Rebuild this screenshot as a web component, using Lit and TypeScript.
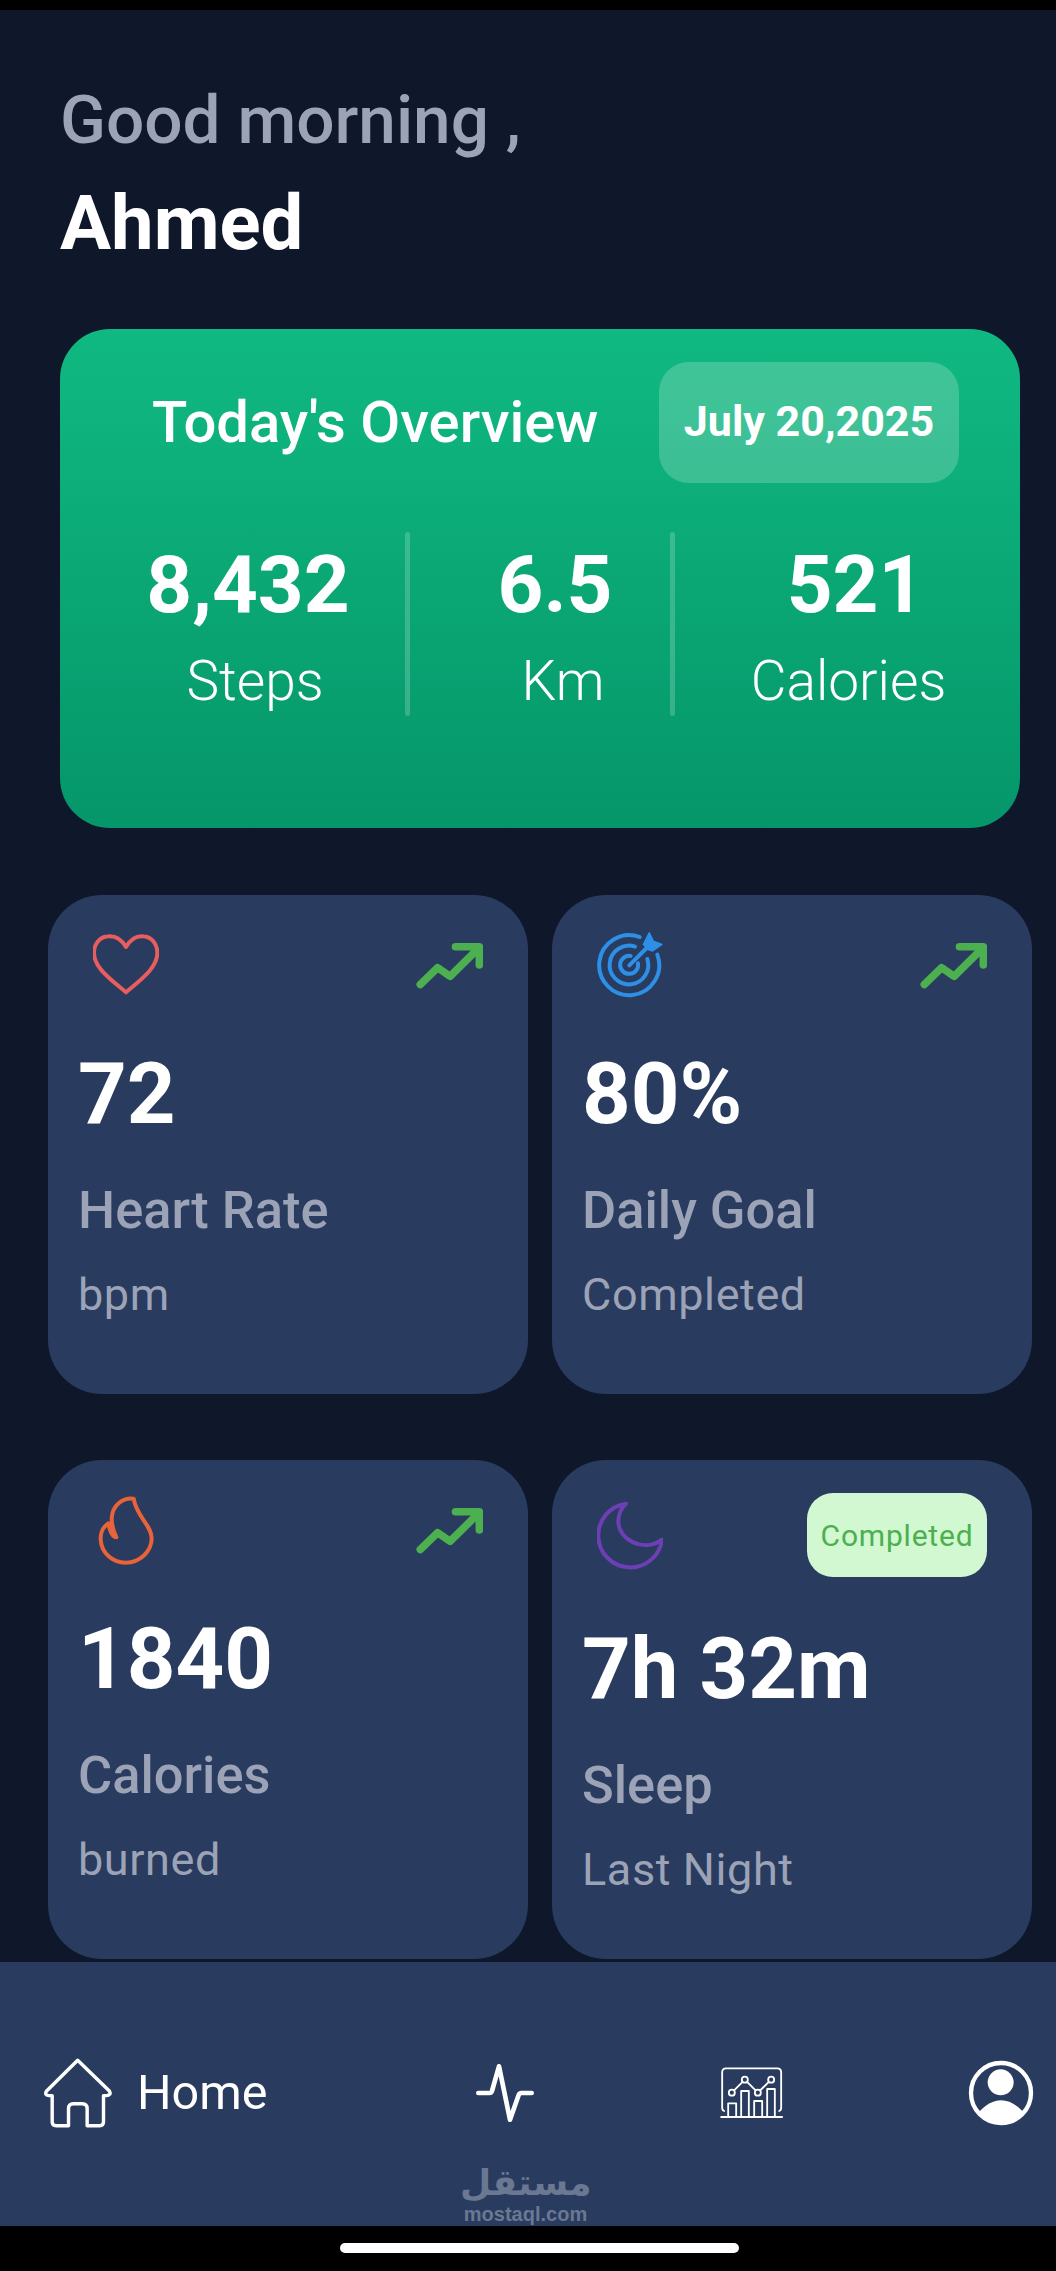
import { LitElement, html, css, svg } from "lit";

const trendIcon = html`<svg class="trend" viewBox="1128 111 202 222">
  <path d="M1141 281L1193 230L1231 256L1318 170M1247 167H1319V222"/>
</svg>`;

const icons = {
  heart: svg`<path stroke="#e85d5d" d="M259 172C245 148 225 138 205 140C178 142 163 165 163 190C163 235 215 270 259 308C303 270 353 235 353 190C353 165 338 142 311 140C291 138 273 148 259 172Z"/>`,
  target: svg`<g stroke="#2d8fe6">
      <path d="M149 33A90 90 0 1 0 202 86"/>
      <path d="M135 62A58 58 0 1 0 172 99"/>
      <path d="M122 90A27 27 0 1 0 144 112"/>
      <path d="M118 118L170 66"/>
      <path fill="#2d8fe6" stroke-width="4" d="M178 20L190 45L216 55L188 75L172 70L160 55Z"/>
    </g>`,
  flame: svg`<path stroke="#e8633a" d="M282 146C250 142 218 165 216 205C216 225 222 245 230 262C222 262 212 250 206 220C190 230 182 250 183 268C185 310 220 338 258 338C300 338 336 305 336 265C336 225 290 200 282 146Z"/>`,
  moon: svg`<path stroke="#6c3fb5" d="M228 162A96 96 0 1 0 336 270C280 310 205 270 205 215C205 195 215 175 228 162Z"/>`,
};

const boxes: Record<string, string> = {
  heart: "160 115 198 222",
  target: "21 6 198 222",
  flame: "160 129 198 222",
  moon: "141 145 198 222",
};

export class StatTile extends LitElement {
  static properties = {
    icon: { type: String },
    value: { type: String },
    label: { type: String },
    sub: { type: String },
    badge: { type: String },
  };

  declare icon: keyof typeof icons;
  declare value: string;
  declare label: string;
  declare sub: string;
  declare badge: string;

  constructor() {
    super();
    this.icon = "heart";
    this.value = "";
    this.label = "";
    this.sub = "";
    this.badge = "";
  }

  static styles = css`
    :host {
      display: block;
      box-sizing: border-box;
      height: 499px;
      background: #293b5e;
      border-radius: 54px;
      padding: 33px 45px 0 30px;
      font-family: Roboto, sans-serif;
    }
    .top {
      display: flex;
      justify-content: space-between;
      align-items: center;
      min-height: 74px;
      margin-left: 15px;
    }
    .icon {
      width: 66px;
      height: 74px;
      fill: none;
      stroke-width: 12;
      stroke-linejoin: round;
      stroke-linecap: round;
    }
    .trend {
      width: 67px;
      height: 74px;
      fill: none;
      stroke: #4caf50;
      stroke-width: 23;
      stroke-linecap: round;
      stroke-linejoin: round;
    }
    .badge {
      width: 180px;
      height: 84px;
      border-radius: 26px;
      background: #d1f8d0;
      color: #4caf50;
      font-size: 30px;
      letter-spacing: 0.8px;
      display: flex;
      align-items: center;
      justify-content: center;
    }
    .value {
      font-size: 85px;
      font-weight: 700;
      color: #fff;
      line-height: 100px;
      margin-top: 42px;
    }
    .label {
      font-size: 52.4px;
      font-weight: 500;
      color: #9ca3b7;
      line-height: 60px;
      margin-top: 36px;
    }
    .sub {
      font-size: 45px;
      color: #9ca3b7;
      line-height: 50px;
      margin-top: 30px;
      letter-spacing: 0.6px;
    }
  `;

  render() {
    return html`
      <div class="top">
        <svg class="icon" viewBox=${boxes[this.icon]}>${icons[this.icon]}</svg>
        ${this.badge ? html`<div class="badge">${this.badge}</div>` : trendIcon}
      </div>
      <div class="value">${this.value}</div>
      <div class="label">${this.label}</div>
      <div class="sub">${this.sub}</div>
    `;
  }
}
customElements.define("stat-tile", StatTile);

export class AppRoot extends LitElement {
  static styles = css`
    :host {
      display: flex;
      flex-direction: column;
      width: 1056px;
      height: 2271px;
      background: #0f172a;
      font-family: Roboto, sans-serif;
      color: #fff;
      overflow: hidden;
    }
    .statusbar {
      height: 10px;
      background: #000;
    }
    .hello {
      margin: 70px 0 0 60px;
      font-size: 67.5px;
      font-weight: 500;
      line-height: 80px;
      color: #9ca3b7;
    }
    .name {
      margin: 23px 0 0 60px;
      font-size: 76px;
      font-weight: 700;
      line-height: 80px;
    }
    .overview {
      box-sizing: border-box;
      height: 499px;
      margin: 66px 36px 0 60px;
      padding: 33px 61px 0 0;
      border-radius: 50px;
      background: linear-gradient(180deg, #10b981, #059669);
    }
    .overview-head {
      display: flex;
      justify-content: space-between;
      align-items: center;
      padding-left: 92px;
    }
    .overview-title {
      font-size: 58px;
      font-weight: 500;
      padding-bottom: 2px;
    }
    .date {
      box-sizing: border-box;
      width: 300px;
      height: 121px;
      padding-bottom: 3px;
      border-radius: 30px;
      background: rgba(255, 255, 255, 0.2);
      font-size: 43px;
      font-weight: 700;
      display: flex;
      align-items: center;
      justify-content: center;
    }
    .stats {
      display: flex;
      height: 184px;
      margin: 49px -61px 0 0;
    }
    .stat {
      flex: none;
      box-sizing: border-box;
      text-align: center;
      padding-top: 8px;
    }
    .stat-value {
      font-size: 80px;
      font-weight: 700;
      line-height: 90px;
    }
    .stat-label {
      font-size: 55px;
      font-weight: 300;
      line-height: 60px;
      margin-top: 21px;
    }
    .steps {
      width: 345px;
      padding-left: 31px;
    }
    .steps .stat-label {
      padding-left: 14px;
    }
    .km {
      width: 260px;
      padding-left: 30px;
    }
    .km .stat-label {
      padding-left: 16px;
    }
    .cal {
      width: 345px;
      padding-left: 16px;
    }
    .cal .stat-label {
      padding-right: 14px;
    }
    .divider {
      flex: none;
      width: 5px;
      border-radius: 3px;
      background: rgba(255, 255, 255, 0.2);
    }
    .tiles {
      display: grid;
      grid-template-columns: 480px 480px;
      gap: 66px 24px;
      margin: 67px 24px 0 48px;
    }
    nav {
      position: relative;
      box-sizing: border-box;
      height: 264px;
      margin-top: 3px;
      background: #293b5e;
      padding: 0 22px 3px 44px;
      display: flex;
      align-items: center;
      justify-content: space-between;
    }
    .home {
      display: flex;
      align-items: center;
      gap: 25px;
      padding-right: 23px;
      font-size: 48.5px;
    }
    nav svg {
      fill: none;
      stroke: #fff;
      stroke-linecap: round;
      stroke-linejoin: round;
    }
    .home svg {
      width: 68px;
      height: 70px;
      stroke-width: 10.5;
    }
    .pulse {
      width: 60px;
      height: 58px;
      stroke-width: 14;
    }
    .chart {
      width: 63px;
      height: 52px;
      stroke-width: 5.5;
    }
    .profile {
      width: 66px;
      height: 66px;
      stroke-width: 13;
    }
    nav svg .solid {
      fill: #fff;
      stroke: none;
    }
    .watermark {
      position: absolute;
      left: 460px;
      top: 200px;
      width: 131px;
      text-align: center;
      color: #6a7892;
      font-weight: 700;
    }
    .watermark-ar {
      font-family: "DejaVu Sans", sans-serif;
      font-size: 36px;
      line-height: 42px;
    }
    .watermark-en {
      font-family: "Liberation Sans", sans-serif;
      font-size: 20px;
      line-height: 20px;
    }
    .gesture {
      flex: 1;
      background: #000;
      padding-top: 17px;
    }
    .gesture div {
      width: 399px;
      height: 10px;
      margin-left: 340px;
      border-radius: 5px;
      background: #fff;
    }
  `;

  render() {
    return html`
      <div class="statusbar"></div>
      <div class="hello">Good morning ,</div>
      <div class="name">Ahmed</div>
      <section class="overview">
        <div class="overview-head">
          <div class="overview-title">Today's Overview</div>
          <div class="date">July 20,2025</div>
        </div>
        <div class="stats">
          <div class="stat steps">
            <div class="stat-value">8,432</div>
            <div class="stat-label">Steps</div>
          </div>
          <div class="divider"></div>
          <div class="stat km">
            <div class="stat-value">6.5</div>
            <div class="stat-label">Km</div>
          </div>
          <div class="divider"></div>
          <div class="stat cal">
            <div class="stat-value">521</div>
            <div class="stat-label">Calories</div>
          </div>
        </div>
      </section>
      <section class="tiles">
        <stat-tile icon="heart" value="72" label="Heart Rate" sub="bpm"></stat-tile>
        <stat-tile icon="target" value="80%" label="Daily Goal" sub="Completed"></stat-tile>
        <stat-tile icon="flame" value="1840" label="Calories" sub="burned"></stat-tile>
        <stat-tile icon="moon" value="7h 32m" label="Sleep" sub="Last Night" badge="Completed"></stat-tile>
      </section>
      <nav>
        <div class="home">
          <svg viewBox="130 355 208 214">
            <path d="M233 362L138 456Q130 468 145 470L155 470L155 550Q155 562 167 562L205 562L205 510Q205 495 220 495L247 495Q262 495 262 510L262 562L300 562Q312 562 312 550L312 470L322 470Q337 468 330 456Z"/>
          </svg>
          Home
        </div>
        <svg class="pulse" viewBox="45 45 180 174">
          <path d="M55 132H88Q94 132 96 126L117 52L150 212L176 138Q178 132 184 132H215"/>
        </svg>
        <svg class="chart" viewBox="574 386 188 156">
          <path d="M586 518Q580 516 580 508V402Q580 390 592 390H745Q757 390 757 402V508Q757 516 751 518"/>
          <path d="M577 536H760"/>
          <path d="M598 532V495H622V532M637 532V458H660V532M676 532V488H700V532M715 532V452H738V532"/>
          <path d="M609 463L648 424L687 463L727 424"/>
          <circle cx="609" cy="463" r="9" fill="#293b5e"/>
          <circle cx="648" cy="424" r="9" fill="#293b5e"/>
          <circle cx="687" cy="463" r="9" fill="#293b5e"/>
          <circle cx="727" cy="424" r="9" fill="#293b5e"/>
        </svg>
        <svg class="profile" viewBox="1307 363 198 198">
          <circle cx="1406" cy="462" r="90"/>
          <circle class="solid" cx="1405" cy="430" r="39"/>
          <path class="solid" d="M1338 522C1360 495 1385 484 1406 484C1428 484 1452 495 1475 522A92 92 0 0 1 1338 522Z"/>
        </svg>
        <div class="watermark">
          <div class="watermark-ar">مستقل</div>
          <div class="watermark-en">mostaql.com</div>
        </div>
      </nav>
      <div class="gesture"><div></div></div>
    `;
  }
}
customElements.define("app-root", AppRoot);
